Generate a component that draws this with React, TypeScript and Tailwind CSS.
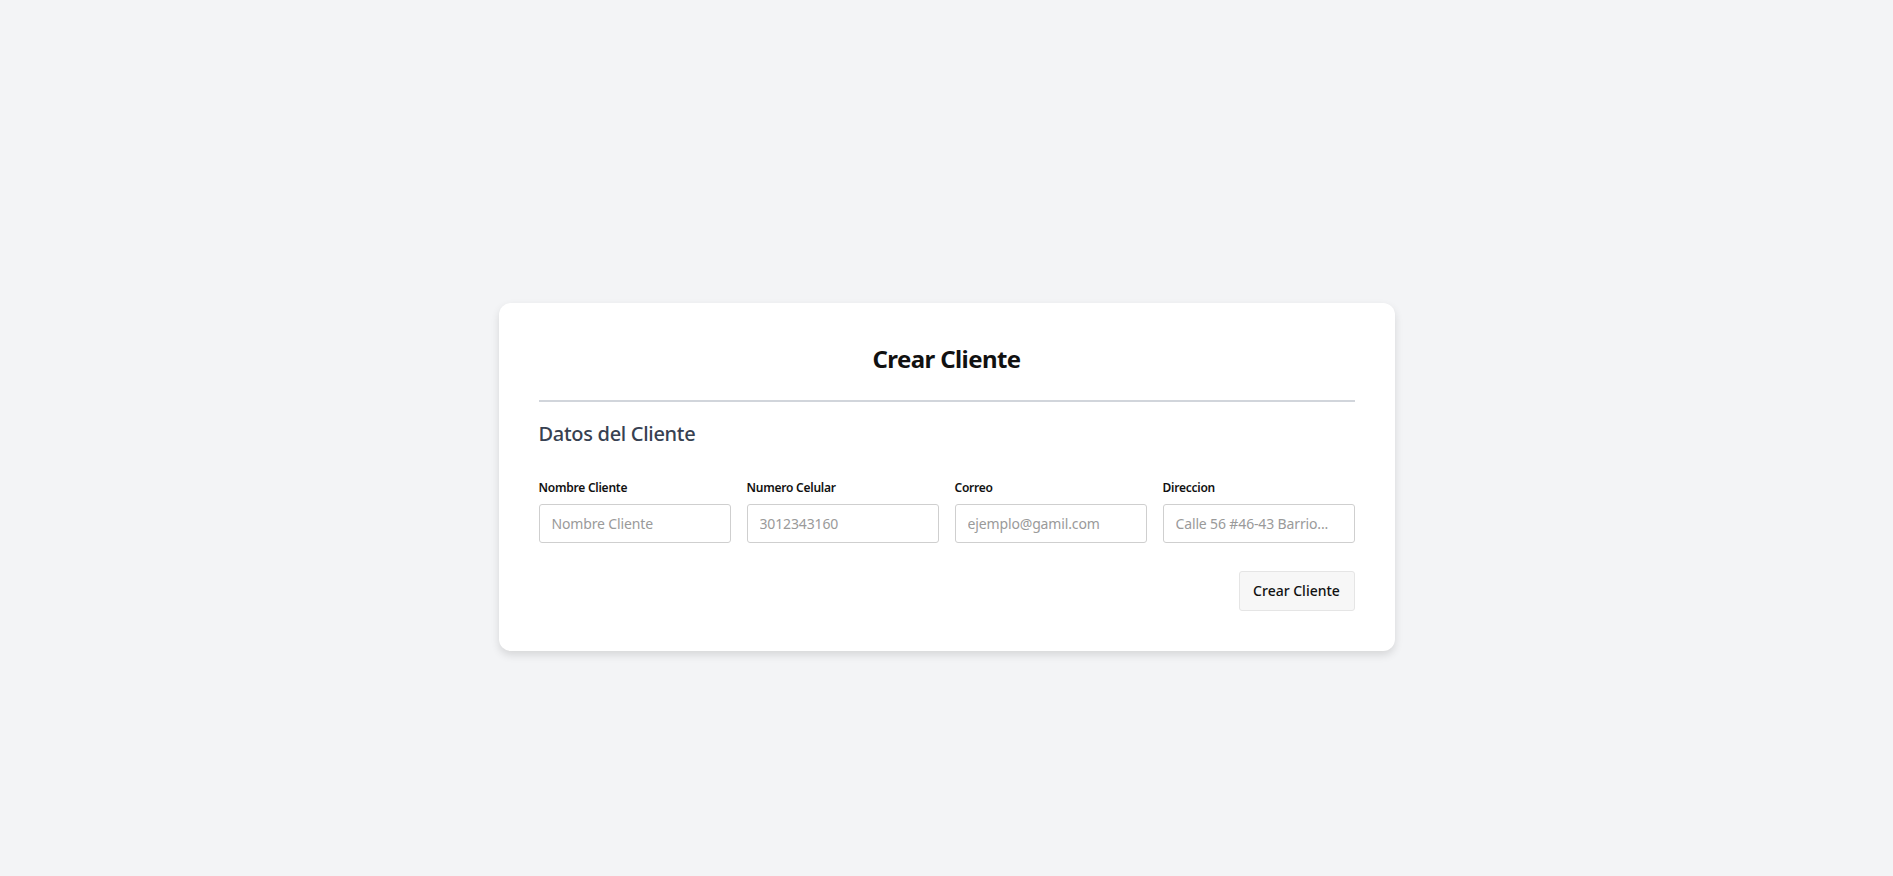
export default function App() {
  const fields = [
    { label: "Nombre Cliente", placeholder: "Nombre Cliente", type: "text" },
    { label: "Numero Celular", placeholder: "3012343160", type: "tel" },
    { label: "Correo", placeholder: "ejemplo@gamil.com", type: "email" },
    { label: "Direccion", placeholder: "Calle 56 #46-43 Barrio...", type: "text" },
  ];

  return (
    <div className="min-h-screen w-full bg-[#f3f4f6] flex justify-center pt-[303px] font-['Noto_Sans',sans-serif]">
      <div className="w-[896px] h-fit rounded-xl bg-white p-10 shadow-[0_4px_8px_rgba(0,0,0,0.12)]">
        <h1 className="text-center text-2xl leading-8 font-bold tracking-[-0.025em] text-[#111]">Crear Cliente</h1>
        <div className="mt-[25px] border-b-2 border-[#d1d5db]" />
        <h2 className="mt-[18px] text-xl leading-7 font-medium tracking-[-0.015em] text-[#374151]">Datos del Cliente</h2>
        <div className="mt-8 grid grid-cols-4 gap-4">
          {fields.map((f) => (
            <div key={f.label} className="flex flex-col">
              <label className="mb-2 text-xs leading-4 font-semibold tracking-[-0.02em] text-[#111]">{f.label}</label>
              <input
                type={f.type}
                placeholder={f.placeholder}
                className="h-[39px] rounded-[3px] border border-[#cfcfcf] px-3 text-sm tracking-[-0.01em] text-[#111] placeholder:text-[#9a9a9a] outline-none"
              />
            </div>
          ))}
        </div>
        <div className="mt-7 flex justify-end">
          <button className="h-10 w-[116px] rounded-[3px] border border-[#e5e5e5] bg-[#f7f7f7] text-sm font-medium text-[#111]">
            Crear Cliente
          </button>
        </div>
      </div>
    </div>
  );
}
